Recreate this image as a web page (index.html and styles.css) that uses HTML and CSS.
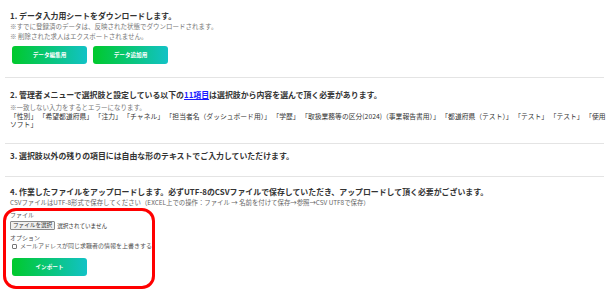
FILE: index.html
```html
<!DOCTYPE html>
<html>
<head>
 <meta charset="utf-8">
 <meta name="viewport" content="width=device-width, initial-scale=1.0">
 <title>データインポート</title>
 <link rel="stylesheet" href="styles.css">
</head>
<body>
<div class="ImportPage">

 <div class="ImportSection Step1">
  <h2>1. データ入力用シートをダウンロードします。</h2>
  <p class="Note">※すでに登録済のデータは、反映された状態でダウンロードされます。</p>
  <p class="Note">※ 削除された求人はエクスポートされません。</p>
  <div class="ButtonRow">
   <button type="button" class="GradButton">データ編集用</button>
   <button type="button" class="GradButton">データ追加用</button>
  </div>
 </div>

 <div class="ImportSection Step2">
  <h2>2. 管理者メニューで選択肢と設定している以下の<a href="#">11項目</a>は選択肢から内容を選んで頂く必要があります。</h2>
  <p class="Note">※一致しない入力をするとエラーになります。</p>
  <p class="Items">「性別」 「希望都道府県」 「注力」 「チャネル」 「担当者名（ダッシュボード用）」 「学歴」 「取扱業務等の区分(2024)（事業報告書用）」 「都道府県（テスト）」 「テスト」 「テスト」 「使用ソフト」</p>
 </div>

 <div class="ImportSection Step3">
  <h2>3. 選択肢以外の残りの項目には自由な形のテキストでご入力していただけます。</h2>
 </div>

 <div class="ImportSection Step4">
  <h2>4. 作業したファイルをアップロードします。必ずUTF-8のCSVファイルで保存していただき、アップロードして頂く必要がございます。</h2>
  <p class="Note CsvNote">CSVファイルはUTF-8形式で保存してください（EXCEL上での操作：ファイル → 名前を付けて保存→参照→CSV UTF8で保存）</p>

  <form class="UploadForm">
   <div class="FieldLabel">ファイル</div>
   <div class="FileRow">
    <span class="FileButton">ファイルを選択</span>
    <span class="FileName">選択されていません</span>
   </div>
   <div class="FieldLabel OptionLabel">オプション</div>
   <label class="CheckRow">
    <span class="CheckBox"></span>
    メールアドレスが同じ求職者の情報を上書きする
   </label>
   <button type="button" class="GradButton">インポート</button>
  </form>
 </div>

</div>
</body>
</html>
```

FILE: styles.css
```css
body {
 margin:0;
 background-color:#ffffff;
 color:#333333;
 font-family:"Noto Sans CJK JP", "Noto Sans", sans-serif;
}

.ImportPage {
 width:599px;
 margin-left:5px;
}

.ImportSection {
 padding:12px 5px 15px 5px;
 border-bottom:1.5px solid #e4e4e4;
}
.ImportSection h2 {
 margin:0;
 font-size:7.9px;
 line-height:10px;
 font-weight:bold;
 color:#333333;
}
.ImportSection h2 a {
 color:#1a1aff;
 text-decoration:underline;
}

.Step1 {
 padding-top:11px;
 padding-bottom:13px;
}
.Step3 {
 padding-top:7px;
}
.Step4 {
 padding-top:10px;
 padding-bottom:0;
 border-bottom:none;
}

.Note {
 margin:0;
 font-size:6.5px;
 line-height:10px;
 color:#777777;
}
.Step2 .Note {
 margin-top:2px;
}
.CsvNote {
 margin-top:1px;
 font-size:6.4px;
 color:#666666;
}

.Items {
 margin:0 -12px 0 0;
 font-size:6.8px;
 line-height:8px;
 color:#333333;
}

.ButtonRow {
 display:flex;
 gap:6px;
 margin-top:5px;
 padding-left:2px;
}

.GradButton {
 width:75px;
 height:18px;
 padding:0;
 border:none;
 border-radius:3px;
 background:linear-gradient(to right, #00c92c, #12c2c6);
 color:#ffffff;
 font-family:inherit;
 font-size:5.6px;
 font-weight:bold;
}

/* Upload form */
.UploadForm {
 box-sizing:border-box;
 width:152px;
 margin-left:-7px;
 padding:0 0 10px 4px;
 border:3px solid #ff0000;
 border-radius:13px;
}
.FieldLabel {
 font-size:6px;
 line-height:8px;
 color:#555555;
}
.OptionLabel {
 margin-top:4px;
}
.FileRow {
 display:flex;
 align-items:center;
 gap:2px;
 margin-top:2px;
}
.FileButton {
 box-sizing:border-box;
 height:9px;
 padding:0 2px;
 border:1px solid #8a8a8a;
 border-radius:1px;
 background:#efefef;
 font-size:5.6px;
 line-height:7px;
 color:#333333;
}
.FileName {
 font-size:5.6px;
 color:#333333;
}
.CheckRow {
 display:flex;
 align-items:center;
 gap:3px;
 padding-left:2px;
 font-size:6px;
 line-height:8px;
 color:#555555;
}
.CheckBox {
 box-sizing:border-box;
 width:5px;
 height:5px;
 border:1px solid #777777;
 border-radius:1px;
}
.UploadForm .GradButton {
 margin-top:8px;
 margin-left:2px;
 height:17.5px;
}
```
